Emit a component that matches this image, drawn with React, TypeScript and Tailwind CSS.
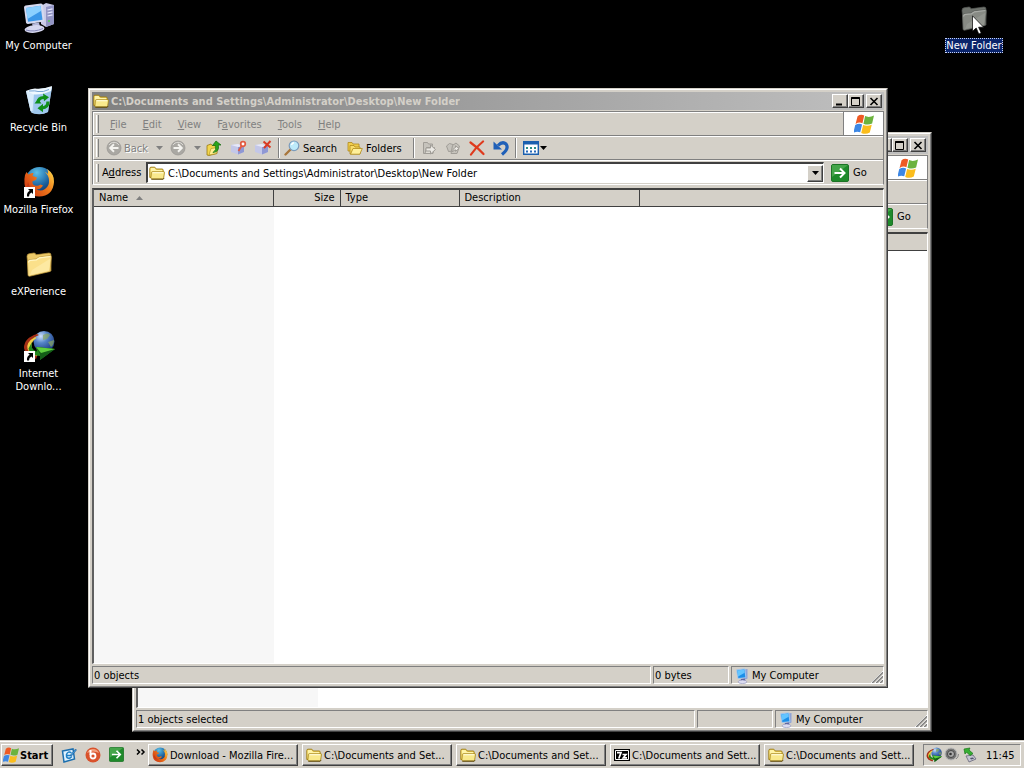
import React from "react";

type IconProps = { className?: string };

const raised =
  "border border-t-white border-l-white border-r-[#404040] border-b-[#404040] shadow-[inset_-1px_-1px_0_#808080] bg-[#d4d0c8]";
const sunken = "border border-t-[#808080] border-l-[#808080] border-r-white border-b-white";

function FolderIcon({ className }: IconProps) {
  return (
    <svg viewBox="0 0 16 16" className={className} aria-hidden="true">
      <path d="M.8 12.500V3.500Q.8 2.200 2 2.200h3.800L7.300 4H13q1.200 0 1.200 1.200V12.500z" fill="#f3d660" stroke="#9c7a12" strokeWidth=".9" />
      <path d="M1.700 11.500V4q0-.9.8-.9h3L6.900 4.900h6.300v2H3.500z" fill="#fff4a8" />
      <path d="M3.200 6.700h11.600q.8 0 .7.8l-.8 5.300q-.1 1-1 1H2.800q-1 0-.9-1l.5-5.300q.1-.8.8-.8z" fill="#f9e98c" stroke="#a58317" strokeWidth=".8" />
      <path d="M3.500 7.700h10.800" stroke="#fffbd8" strokeWidth="1.200" />
      <path d="M2.300 14.300h11.900l.9-1.300" fill="none" stroke="#5c4708" strokeWidth=".9" />
    </svg>
  );
}

function BigFolder({ className, dim }: IconProps & { dim?: boolean }) {
  const front = dim ? "#878a84" : "#fbe08a";
  const back = dim ? "#70746f" : "#ecc968";
  const edge = dim ? "#555855" : "#b8923a";
  return (
    <svg viewBox="0 0 32 32" className={className} aria-hidden="true">
      <path d="M4 8.500q0-2.500 2-2.700L11 5q1.500 0 2 1.800L26 5q2 0 2 2v16L6 27z" fill={back} stroke={edge} strokeWidth=".7" />
      <path d="M4.500 14q0-2 2-2.300l6.500-.7 3-2L27 7.500q1.500 0 1.300 2L27 23.500 6.500 28.300Q5 28.300 5 27z" fill={front} stroke={edge} strokeWidth=".7" />
      <path d="M5.500 14.500q0-1.800 2-2.100l6-.6 3-2L27.500 8.500" fill="none" stroke={dim ? "#a8aba6" : "#fff6c4"} strokeWidth="1.200" />
      <path d="M7 27l19-4.500 1.500-12L9 22z" fill={dim ? "#999c96" : "#ffeeb2"} opacity=".6" />
    </svg>
  );
}

function ComputerIcon({ className }: IconProps) {
  return (
    <svg viewBox="0 0 32 32" className={className} aria-hidden="true">
      <path d="M18 4l5-3 8 2v19l-8 3-5-3z" fill="#c9cae6" />
      <path d="M23 5l8-2v19l-8 3z" fill="#9395c4" />
      <path d="M24.500 8l5-1.200M24.500 11l5-1.200M24.500 14l5-1.200" stroke="#e9eaff" strokeWidth="1.200" />
      <path d="M25 19h2" stroke="#4fd04a" strokeWidth="1.500" />
      <path d="M1 5.500Q1 4 2.500 3.600L18 1.500q1.500 0 2 1.500l1.500 15q0 1.500-1.500 1.800L5 22q-1.500 0-2-1.500z" fill="#d5d9ef" />
      <path d="M3 6l14.500-2.200 2 14L5 19.800z" fill="#3b97e8" />
      <path d="M3 6l14.500-2.200.8 5L4.500 17z" fill="#8bd0ff" />
      <path d="M9 21.500l7-1 1 4-7 1z" fill="#b4b6d8" />
      <ellipse cx="11.500" cy="27" rx="10" ry="3.800" fill="#d6d7ef" transform="rotate(-5 11.500 27)" />
      <path d="M3 28q8 2.500 17-1.500" fill="none" stroke="#8487b8" />
    </svg>
  );
}

function SmallComputer({ className }: IconProps) {
  return (
    <svg viewBox="0 0 16 16" className={className} aria-hidden="true">
      <path d="M10 1.500l3.500-.5v9.500L10 12z" fill="#8fa3d6" />
      <path d="M2.300 2.200Q2.300 1.400 3 1.300L10.500.5q.8 0 .9.700l1 8q0 .8-.7.900L4.500 11q-.9 0-1-.8z" fill="#9cc3ef" />
      <path d="M3.300 2.400l7-.8 1 7.600-6.900.8z" fill="#1b8fe8" />
      <path d="M3.300 2.400l7-.8.4 3.200-6.600 3.700z" fill="#63c5ff" />
      <path d="M7 11l3.500-.5 1 2.500H6.500z" fill="#5960a0" />
      <ellipse cx="8.500" cy="13.800" rx="4.300" ry="1.800" fill="#dcdcf0" stroke="#7b7ead" strokeWidth=".5" />
    </svg>
  );
}

function RecycleIcon({ className }: IconProps) {
  return (
    <svg viewBox="0 0 32 32" className={className} aria-hidden="true">
      <path d="M3 7L29 3l-4 25q-6 3.500-14.500 1.500Q8 29 7.500 27z" fill="#a9cdee" />
      <path d="M3 7l8 2-1.500 18L7.500 27z" fill="#d8ecfc" />
      <path d="M11 9L29 3l-4 25q-6 3-14 1.500z" fill="#9cc6ee" opacity=".75" />
      <path d="M3 7q5-2.500 9-2.500 8 1 17-2.500l-1 5q-9 4-17 3.500z" fill="#eff8ff" />
      <path d="M6 7q7-.5 9 .5 5 1 11-2" stroke="#79a6d6" fill="none" />
      <g fill="none" stroke="#0f8f1a" strokeWidth="3.200">
        <path d="M15 19q0-5.500 6-5.500" />
        <path d="M25 17.500q0 6-6 6.500" />
      </g>
      <path d="M20 9.500l6 3.800-5 4zM20 19.800l-5.500 4.500 5.500 4zM11.500 19.500l7 0-3.500-4.500z" fill="#0f8f1a" />
    </svg>
  );
}

function FirefoxIcon({ className }: IconProps) {
  return (
    <svg viewBox="0 0 32 32" className={className} aria-hidden="true">
      <defs>
        <radialGradient id="ffGlobe" cx=".4" cy=".2" r=".8">
          <stop offset="0" stopColor="#5cc1e8" />
          <stop offset=".6" stopColor="#1c629f" />
          <stop offset="1" stopColor="#0c2c60" />
        </radialGradient>
        <linearGradient id="ffFur" x1="0" x2="1" y1=".7" y2="0">
          <stop offset="0" stopColor="#cf3a12" />
          <stop offset=".55" stopColor="#f07d1c" />
          <stop offset="1" stopColor="#ffe14d" />
        </linearGradient>
      </defs>
      <circle cx="16.500" cy="15" r="14" fill="url(#ffGlobe)" />
      <path d="M2 9l1.500-3 2 2.500Q8 6.500 10.500 7L9.500 10l4.500 1.500-1 2.500-3.500 1.200q-.5 3.300 2.500 4.300 3 1 5.500-1l2.500 1q-2.500 4.500-7 3.500 4.500 3 9 0 4.500-3 4-9-.4-5-4-8 1 0 3 2Q25.500 5 24 3q7.500 5 7 13-1 14-15 14.500Q3 30 1.500 18 1 13 2 9z" fill="url(#ffFur)" />
      <path d="M5 16q2 8 9 9.500-6 .5-10-5z" fill="#b62c12" opacity=".6" />
    </svg>
  );
}

function IdmIcon({ className }: IconProps) {
  return (
    <svg viewBox="0 0 32 32" className={className} aria-hidden="true">
      <defs>
        <radialGradient id="idmGlobe" cx=".35" cy=".25" r=".8">
          <stop offset="0" stopColor="#cfe2fa" />
          <stop offset=".4" stopColor="#5585c9" />
          <stop offset="1" stopColor="#17347a" />
        </radialGradient>
      </defs>
      <circle cx="21" cy="11.500" r="10.500" fill="url(#idmGlobe)" />
      <path d="M20 5q5-3 7 0l-3 4-4 1zM25 12l6-2q0 5-3 7z" fill="#8aa860" opacity=".7" />
      <path d="M14 4Q1 8 1 18q1 8 12 11l2-5Q7 21 7 15q1-7 9-10z" fill="#a52f16" />
      <path d="M12 7Q3 12 4.500 19q2 5 9.500 7l1-3Q8 21 8.500 15q.5-4 5-7z" fill="#f1cf46" />
      <path d="M9 12q-2 8 5 9.500l-1-4.500 19 2-15 11 0-4Q6 25 5.500 18.500z" fill="#23861f" />
      <path d="M13 17l19 2L17 30l0-6z" fill="#135e17" />
      <path d="M13 17l19 2-14 4z" fill="#5fce3f" />
    </svg>
  );
}

function ShortcutBadge() {
  return (
    <svg viewBox="0 0 11 11" className="absolute bottom-0 left-px size-[11px]" aria-hidden="true">
      <path d="M0 0h11v11H0z" fill="#fff" />
      <path d="M4 2h5v5L7.400 5.400Q5 6.500 5 9.500H3Q2.500 5.500 5.700 3.700z" fill="#000" />
    </svg>
  );
}

function FlagIcon({ className }: IconProps) {
  return (
    <svg viewBox="1 1 18 18" className={className} aria-hidden="true">
      <path d="M4.200 3q3-2.300 6-.6L8.600 9.300q-3-1.400-6.200.7z" fill="#ee5a24" />
      <path d="M11 2.900q3.500 1.600 8-.5L17.300 9.600q-3.800 1.800-7.800.2z" fill="#6cb33e" />
      <path d="M2.100 11q3-1.900 6.200-.6L6.600 17.500q-3-1.400-6.300.6z" fill="#3d87e4" />
      <path d="M9.200 10.900q3.800 1.500 7.800-.3L15.200 17.700q-3.700 2-7.700.3z" fill="#fbbd1d" />
    </svg>
  );
}

function CircleArrow({ forward }: { forward?: boolean }) {
  return (
    <svg viewBox="0 0 16 16" className="size-4 shrink-0" aria-hidden="true">
      <circle cx="8" cy="8" r="7" fill="#aaa8a3" stroke="#9a9894" strokeWidth=".8" />
      <path d="M3 5a6 6 0 0 1 10 0" fill="none" stroke="#dedcd7" />
      <path
        d={forward ? "M3.500 8h8M8 4.300L11.800 8 8 11.700" : "M12.500 8h-8M8 4.300L4.200 8 8 11.700"}
        fill="none"
        stroke="#f4f3ef"
        strokeWidth="1.900"
      />
    </svg>
  );
}

function UpIcon() {
  return (
    <svg viewBox="0 0 16 16" className="size-4" aria-hidden="true">
      <path d="M1 15V5.500l4-1.500 1 1.500 5-.5v8.500L3 15.500z" fill="#f4d64e" stroke="#97790f" strokeWidth=".8" />
      <path d="M3 15l2-6.500 7-1-1.500 6z" fill="#fff091" stroke="#a8891c" strokeWidth=".6" />
      <path d="M7 12.500q4-2.500 2.300-7H6.500L10 1l5 4h-2.700q1.500 7-5.300 7.500z" fill="#2ba51c" stroke="#126a10" strokeWidth=".7" />
    </svg>
  );
}

function DriveIcon({ cross }: { cross?: boolean }) {
  return (
    <svg viewBox="0 0 18 16" className="h-4 w-[18px]" aria-hidden="true">
      <path d="M1 5l7-1 6 2v6l-6 2.500L1 12z" fill="#c3c7e8" />
      <path d="M8 7l6-1v6l-6 2.500z" fill="#8f98d4" />
      <path d="M1 5l7-1 6 2-6 1z" fill="#e7e9f9" />
      {cross ? (
        <path d="M9.500 1.500l7 6M16.500 1l-6.500 7" stroke="#d93a23" strokeWidth="2" />
      ) : (
        <>
          <circle cx="13" cy="4" r="2.300" fill="#fff" stroke="#e25a40" strokeWidth="1.700" />
          <path d="M11.500 6l-3 5" stroke="#e25a40" strokeWidth="1.800" />
        </>
      )}
    </svg>
  );
}

function SearchIcon() {
  return (
    <svg viewBox="0 0 16 16" className="size-4" aria-hidden="true">
      <path d="M6.500 9.500L1.500 14.500" stroke="#a8763c" strokeWidth="2.400" strokeLinecap="round" />
      <circle cx="10" cy="5.800" r="4.800" fill="#bdeafa" stroke="#7b9bbb" strokeWidth="1.200" />
      <path d="M7.500 5Q8 3 10 2.800" fill="none" stroke="#fff" strokeWidth="1.400" />
    </svg>
  );
}

function FoldersIcon() {
  return (
    <svg viewBox="0 0 16 16" className="size-4" aria-hidden="true">
      <path d="M1 11V2.500h4L6 4h6v7z" fill="#f0cd4d" stroke="#b08a1c" strokeWidth=".8" />
      <path d="M3 14V5.500h4L8 7h5v7z" fill="#f8dc6a" stroke="#b08a1c" strokeWidth=".8" />
      <path d="M3.500 14.200L6 8.500h9.300l-2.500 5.700z" fill="#fff09a" stroke="#b08a1c" strokeWidth=".8" />
    </svg>
  );
}

function FileActionIcon({ copy }: { copy?: boolean }) {
  return (
    <svg viewBox="0 0 16 16" className="size-4" aria-hidden="true">
      <g stroke="#a09d97" strokeWidth="1" fill="#c6c3bc">
        {copy ? (
          <>
            <path d="M1.500 6l3-2.500 5 1.500-1 6-5 .5z" />
            <path d="M6 13.500l1.500-8L11 3l3.500 3-2.500 7.500z" />
            <path d="M7.500 12q0-4 3-4.500V5.800L14 8.500l-3.500 2.800V9.800Q8.500 10 7.500 12z" fill="#eceae5" />
          </>
        ) : (
          <>
            <path d="M2.500 2.500h4l1 1.500h4l-1 9.500h-8z" />
            <path d="M4 13.500l1.500-6h8l-1.500 6z" fill="#dddad3" />
            <path d="M5 8h4.500V5l5 4.500-5 4.500v-3H5z" fill="#eceae5" />
          </>
        )}
      </g>
    </svg>
  );
}

function DeleteIcon() {
  return (
    <svg viewBox="0 0 16 16" className="size-4" aria-hidden="true">
      <path d="M1.500 2.500Q8 7 14.500 14M14 1.500Q7 7 2 14.500" fill="none" stroke="#df3a1d" strokeWidth="2.200" strokeLinecap="round" />
    </svg>
  );
}

function UndoIcon() {
  return (
    <svg viewBox="0 0 16 16" className="size-4" aria-hidden="true">
      <path d="M5 5.500Q9.500.8 13 4q3.500 4.500-4 10.500" fill="none" stroke="#2060b8" strokeWidth="3.200" />
      <path d="M.5 1.500v8h8.500z" fill="#2060b8" />
    </svg>
  );
}

function ViewsIcon() {
  return (
    <svg viewBox="0 0 16 14" className="h-[14px] w-4" aria-hidden="true">
      <path d="M.7.7h14.600v12.600H.7z" fill="#fff" stroke="#1a5fae" strokeWidth="1.400" />
      <path d="M1 1h14v2.500H1z" fill="#1a5fae" />
      <path d="M3 6h2v2H3zM7 6h2v2H7zM11 6h2v2h-2z" fill="#2b8f86" />
      <path d="M3 9.500h2v2H3zM7 9.500h2v2H7zM11 9.500h2v2h-2z" fill="#2869b8" />
    </svg>
  );
}

function GoIcon({ className }: IconProps) {
  return (
    <svg viewBox="0 0 18 18" className={className} aria-hidden="true">
      <rect x=".5" y=".5" width="17" height="17" rx="1.500" fill="#1f8a2b" stroke="#1c7426" />
      <path d="M1 1h16L1 13z" fill="#6cc069" opacity=".5" />
      <path d="M3.500 9h10M9 4.500L13.500 9 9 13.500" fill="none" stroke="#fff" strokeWidth="2" />
    </svg>
  );
}

function Caret({ className }: IconProps) {
  return (
    <svg viewBox="0 0 7 4" className={`h-1 w-[7px] shrink-0 ${className ?? ""}`} aria-hidden="true">
      <path d="M0 0h7L3.500 4z" fill="currentColor" />
    </svg>
  );
}

function Grip() {
  return <span className="mr-[3px] ml-[2px] h-[18px] w-[3px] shrink-0 border-r border-l border-r-[#808080] border-l-white" />;
}

function Divider() {
  return <span className="h-5 w-[2px] shrink-0 border-r border-l border-r-white border-l-[#808080]" />;
}

function ToolButton({ label, className, children }: { label: string; className: string; children: React.ReactNode }) {
  return (
    <button type="button" aria-label={label} className={`flex h-[23px] shrink-0 items-center ${className}`}>
      {children}
    </button>
  );
}

function Toolbar() {
  return (
    <>
      <ToolButton label="Back" className="ml-1 w-16 text-[#808080] [text-shadow:1px_1px_0_#ffffff]">
        <CircleArrow />
        <span className="ml-[2px] w-[30px] text-left">Back</span>
        <Caret className="ml-[2px] w-[6px]" />
      </ToolButton>
      <ToolButton label="Forward" className="w-9 text-[#808080]">
        <CircleArrow forward />
        <Caret className="ml-2 w-[6px]" />
      </ToolButton>
      <ToolButton label="Up" className="w-6">
        <UpIcon />
      </ToolButton>
      <ToolButton label="Map Drive" className="w-6">
        <DriveIcon />
      </ToolButton>
      <ToolButton label="Disconnect" className="w-6">
        <DriveIcon cross />
      </ToolButton>
      <Divider />
      <ToolButton label="Search" className="ml-1 w-[63px] gap-[3px]">
        <SearchIcon />
        Search
      </ToolButton>
      <ToolButton label="Folders" className="w-[66px] gap-[3px]">
        <FoldersIcon />
        Folders
      </ToolButton>
      <Divider />
      <ToolButton label="Move To" className="ml-[6px] w-6">
        <FileActionIcon />
      </ToolButton>
      <ToolButton label="Copy To" className="w-6">
        <FileActionIcon copy />
      </ToolButton>
      <ToolButton label="Delete" className="w-6">
        <DeleteIcon />
      </ToolButton>
      <ToolButton label="Undo" className="w-[22px]">
        <UndoIcon />
      </ToolButton>
      <Divider />
      <ToolButton label="Views" className="ml-[6px] gap-px">
        <ViewsIcon />
        <Caret className="w-[6px]" />
      </ToolButton>
    </>
  );
}

const menus: [string, string, string][] = [
  ["", "F", "ile"],
  ["", "E", "dit"],
  ["", "V", "iew"],
  ["F", "a", "vorites"],
  ["", "T", "ools"],
  ["", "H", "elp"],
];

function CaptionButton({ label, className, children }: { label: string; className?: string; children: React.ReactNode }) {
  return (
    <button type="button" aria-label={label} className={`flex h-[14px] w-4 items-center justify-center ${raised} ${className ?? ""}`}>
      <svg viewBox="0 0 10 9" className="h-[9px] w-[10px]" aria-hidden="true" stroke="#000" fill="none">
        {children}
      </svg>
    </button>
  );
}

type ExplorerProps = { path?: string; status: string; size?: string; className: string };

function ExplorerWindow({ path, status, size, className }: ExplorerProps) {
  return (
    <section
      className={`absolute h-[600px] w-[800px] border border-t-[#d4d0c8] border-l-[#d4d0c8] border-r-[#404040] border-b-[#404040] bg-[#d4d0c8] ${className}`}
    >
      <div className="flex h-full flex-col border border-t-white border-l-white border-r-[#808080] border-b-[#808080] p-[2px]">
        <header className="flex h-[18px] shrink-0 items-center bg-linear-to-r from-[#808080] to-[#c0c0c0] pr-[2px] pl-px text-[#d4d0c8]">
          {path && (
            <>
              <FolderIcon className="size-4 shrink-0" />
              <h1 className="ml-[2px] truncate pt-px font-bold">{path}</h1>
            </>
          )}
          <CaptionButton label="Minimize" className="ml-auto">
            <path d="M1 7.500h6" strokeWidth="2" />
          </CaptionButton>
          <CaptionButton label="Maximize">
            <path d="M.5 1h8" strokeWidth="2" />
            <path d="M.5.500h8v8h-8z" />
          </CaptionButton>
          <CaptionButton label="Close" className="ml-[2px]">
            <path d="M1.500 1l7 7M8.500 1l-7 7" strokeWidth="1.600" />
          </CaptionButton>
        </header>

        <div className="mt-px border border-t-[#808080] border-l-[#808080] border-r-[#808080] border-b-white">
          <nav className="flex h-6 items-stretch border-b border-b-[#808080]">
            <div className="flex flex-1 items-center border-t border-l border-white">
              <Grip />
              {path &&
                menus.map(([before, key, after]) => (
                  <button key={key + after} type="button" className="px-2 pt-px text-[#808080]">
                    {before}
                    <u className="underline-offset-1">{key}</u>
                    {after}
                  </button>
                ))}
            </div>
            <div className="flex w-10 items-center justify-center border-l border-[#808080] bg-white">
              <FlagIcon className="size-5" />
            </div>
          </nav>
          <div className="flex h-6 items-center border-t border-b border-l border-t-white border-b-[#808080] border-l-white">
            <Grip />
            {path && <Toolbar />}
          </div>
          <form className="flex h-6 items-center border-t border-l border-white" onSubmit={(e) => e.preventDefault()}>
            <Grip />
            <label className="flex flex-1 items-center">
              {path && (
                <span className="w-[44px] shrink-0">
                  A<u className="underline-offset-1">d</u>dress
                </span>
              )}
              <span className="flex h-[21px] flex-1 items-center border-t-2 border-r border-b border-l-2 border-t-[#404040] border-r-white border-b-white border-l-[#404040] bg-white pl-px">
                {path && (
                  <>
                    <FolderIcon className="size-4 shrink-0" />
                    <input className="ml-[3px] h-4 min-w-0 flex-1 outline-none" defaultValue={path} />
                  </>
                )}
                <button type="button" aria-label="Show addresses" className={`ml-auto flex h-[17px] w-4 items-center justify-center ${raised}`}>
                  <Caret />
                </button>
              </span>
            </label>
            <button type="submit" className="ml-[7px] flex w-[52px] items-center gap-1">
              <GoIcon className="size-[18px]" />
              Go
            </button>
          </form>
        </div>

        <div className="mt-[3px] flex min-h-0 flex-1 flex-col border-t-2 border-r border-b border-l-2 border-t-[#404040] border-r-white border-b-white border-l-[#606060] bg-white">
          <table className="w-full table-fixed border-collapse bg-[#d4d0c8]">
            <colgroup>
              <col className="w-[179px]" />
              <col className="w-[67px]" />
              <col className="w-[119px]" />
              <col className="w-[180px]" />
              <col />
            </colgroup>
            <thead>
              <tr className="h-4 text-left [&>th]:border-b [&>th]:border-[#404040] [&>th]:p-0 [&>th]:px-[5px] [&>th]:font-normal">
                <th className="border-r">
                  {path && (
                    <span className="flex items-center gap-2">
                      Name
                      <Caret className="rotate-180 text-[#808080]" />
                    </span>
                  )}
                </th>
                <th className="border-r text-right">{path && "Size"}</th>
                <th className="border-r">{path && "Type"}</th>
                <th className="border-r">{path && "Description"}</th>
                <th aria-label="Spare" />
              </tr>
            </thead>
          </table>
          <div className="w-[180px] flex-1 bg-[#f7f7f7]" />
        </div>

        <footer className="mt-[2px] flex h-[18px] shrink-0 gap-[2px]">
          <div className={`flex flex-1 items-center pt-px pl-px ${sunken}`}>{status}</div>
          <div className={`flex w-[76px] items-center pt-px pl-px ${sunken}`}>{size}</div>
          <div className={`relative flex w-[153px] items-center gap-[2px] pt-px pl-[2px] ${sunken}`}>
            <SmallComputer className="size-4" />
            My Computer
            <svg viewBox="0 0 12 12" className="absolute right-0 bottom-0 size-3" aria-hidden="true">
              <path d="M0 12L12 0M4 12l8-8M8 12l4-4" stroke="#fff" />
              <path d="M1.200 12L12 1.200M5.200 12L12 5.200M9.200 12L12 9.200" stroke="#808080" strokeWidth="1.400" />
            </svg>
          </div>
        </footer>
      </div>
    </section>
  );
}

function DesktopItem({ label, shortcut, children }: { label: string; shortcut?: boolean; children: React.ReactNode }) {
  return (
    <button type="button" className="flex h-[82px] w-[77px] flex-col items-center leading-[13px] text-white">
      <span className="relative size-8">
        {children}
        {shortcut && <ShortcutBadge />}
      </span>
      <span className="mt-[5px] text-center whitespace-pre">{label}</span>
    </button>
  );
}

function TaskButton({ label, children }: { label: string; children: React.ReactNode }) {
  return (
    <button type="button" className={`flex h-[22px] max-w-[150px] min-w-0 flex-1 items-center gap-[2px] px-[3px] ${raised}`}>
      {children}
      <span className="pt-px whitespace-nowrap">{label}</span>
    </button>
  );
}

function Taskbar() {
  return (
    <footer className="flex h-7 shrink-0 items-center border-t border-[#d4d0c8] bg-[#d4d0c8] pr-[3px] pl-px shadow-[inset_0_1px_0_#ffffff]">
      <button type="button" className={`flex h-[22px] w-[52px] items-center gap-px pl-px font-bold ${raised}`}>
        <FlagIcon className="size-4 shrink-0" />
        <span className="pt-px">Start</span>
      </button>
      <div className="ml-2 flex items-center gap-2">
        <button type="button" aria-label="Show Desktop">
          <svg viewBox="0 0 16 16" className="size-4" aria-hidden="true">
            <path d="M1.500 4L12 2l1.500 10L3 15z" fill="#dff2ff" stroke="#1d6fae" strokeWidth="1.500" />
            <path d="M10.500 6Q7 3.500 5.500 7.500 5 12 9 11l2-1.500M6 8.500h4" fill="none" stroke="#2080c5" strokeWidth="1.500" />
            <path d="M9.500 8l5-6 1 1-5 6z" fill="#3d9be0" stroke="#164c87" strokeWidth=".5" />
          </svg>
        </button>
        <button type="button" aria-label="Media">
          <svg viewBox="0 0 16 16" className="size-4" aria-hidden="true">
            <circle cx="8" cy="8" r="7.500" fill="#d9522c" />
            <path d="M2 6a6.500 6.500 0 0 1 12 0q-6-3-12 0z" fill="#f3a07e" />
            <path d="M5.500 3v5" stroke="#fff" strokeWidth="2" />
            <circle cx="8" cy="9" r="2.500" fill="none" stroke="#fff" strokeWidth="1.800" />
          </svg>
        </button>
        <button type="button" aria-label="Go">
          <GoIcon className="size-[15px]" />
        </button>
      </div>
      <button type="button" aria-label="More" className="ml-3 flex h-5 w-3 pt-1">
        <svg viewBox="0 0 10 6" className="h-[6px] w-[10px]" aria-hidden="true">
          <path d="M1 .5L3.500 3 1 5.500M5.500.500L8 3 5.500 5.500" fill="none" stroke="#000" strokeWidth="1.500" />
        </svg>
      </button>
      <nav className="flex min-w-0 flex-1 gap-1">
        <TaskButton label="Download - Mozilla Fire...">
          <FirefoxIcon className="size-4 shrink-0" />
        </TaskButton>
        <TaskButton label="C:\Documents and Set...">
          <FolderIcon className="size-4 shrink-0" />
        </TaskButton>
        <TaskButton label="C:\Documents and Set...">
          <FolderIcon className="size-4 shrink-0" />
        </TaskButton>
        <TaskButton label="C:\Documents and Sett...">
          <svg viewBox="0 0 16 12" className="h-3 w-4 shrink-0" aria-hidden="true">
            <path d="M0 0h16v12H0z" fill="#000" />
            <path d="M1.500 1.500h13v9h-13z" fill="none" stroke="#fff" />
            <path d="M2 2h12v8H2z" fill="#000" />
            <path d="M3 3.700h4L4.800 9.500M8.500 5.500h3.500L9.300 8.800H13" fill="none" stroke="#fff" strokeWidth="1.700" />
          </svg>
        </TaskButton>
        <TaskButton label="C:\Documents and Sett...">
          <FolderIcon className="size-4 shrink-0" />
        </TaskButton>
      </nav>
      <div className={`flex h-[22px] w-[98px] shrink-0 items-center gap-[2px] pl-[2px] ${sunken}`}>
        <IdmIcon className="size-4" />
        <svg viewBox="0 0 16 16" className="size-4" aria-hidden="true">
          <circle cx="7" cy="7" r="6" fill="#777" stroke="#bbb" />
          <circle cx="7" cy="7" r="3.500" fill="#a9a9a9" stroke="#444" />
          <circle cx="6.500" cy="7" r="1.300" fill="#333" />
          <path d="M12 12q2.500-1.500 2.500-5" fill="none" stroke="#888" />
        </svg>
        <svg viewBox="0 0 16 16" className="size-4" aria-hidden="true">
          <path d="M4 9l7-1 3 4-7 3z" fill="#c5c5d2" stroke="#666678" strokeWidth=".8" />
          <path d="M8 11l3-.6 1 1.400-3 .8z" fill="#55556c" />
          <path d="M2 2l6-1-1 2 4 3.500-3 2L4.500 5 3 7z" fill="#35ae32" stroke="#187718" strokeWidth=".7" />
        </svg>
        <time className="ml-[6px] pt-px">11:45</time>
      </div>
    </footer>
  );
}

export default function App() {
  return (
    <div className="flex h-screen flex-col overflow-hidden bg-black font-['Tahoma','DejaVu_Sans_Condensed','DejaVu_Sans',sans-serif] text-[11px] leading-[15px] text-black">
      <main className="relative min-h-0 flex-1 overflow-hidden">
        <div className="flex flex-col pt-[2px]">
          <DesktopItem label="My Computer">
            <ComputerIcon className="size-8" />
          </DesktopItem>
          <DesktopItem label="Recycle Bin">
            <RecycleIcon className="size-8" />
          </DesktopItem>
          <DesktopItem label="Mozilla Firefox" shortcut>
            <FirefoxIcon className="size-8" />
          </DesktopItem>
          <DesktopItem label="eXPerience">
            <BigFolder className="size-8" />
          </DesktopItem>
          <DesktopItem label={"Internet\nDownlo..."} shortcut>
            <IdmIcon className="size-8" />
          </DesktopItem>
        </div>

        <button type="button" className="absolute top-[2px] right-3 flex w-[76px] flex-col items-center text-white">
          <BigFolder className="size-8" dim />
          <span className="mt-1 border border-dotted border-[#c8d4f5] bg-[#0a246a] leading-[13px] whitespace-nowrap">New Folder</span>
        </button>

        <ExplorerWindow className="top-[132px] left-[132px]" status="1 objects selected" />
        <ExplorerWindow
          className="top-[88px] left-[88px]"
          path="C:\Documents and Settings\Administrator\Desktop\New Folder"
          status="0 objects"
          size="0 bytes"
        />

        <svg viewBox="0 0 12 20" className="pointer-events-none absolute top-[15px] right-[40px] h-5 w-3" aria-hidden="true">
          <path d="M.5.800v15.500L4.200 13l2.600 6 2.400-1-2.600-5.800h5z" fill="#fff" stroke="#000" strokeWidth=".7" />
        </svg>
      </main>
      <Taskbar />
    </div>
  );
}
